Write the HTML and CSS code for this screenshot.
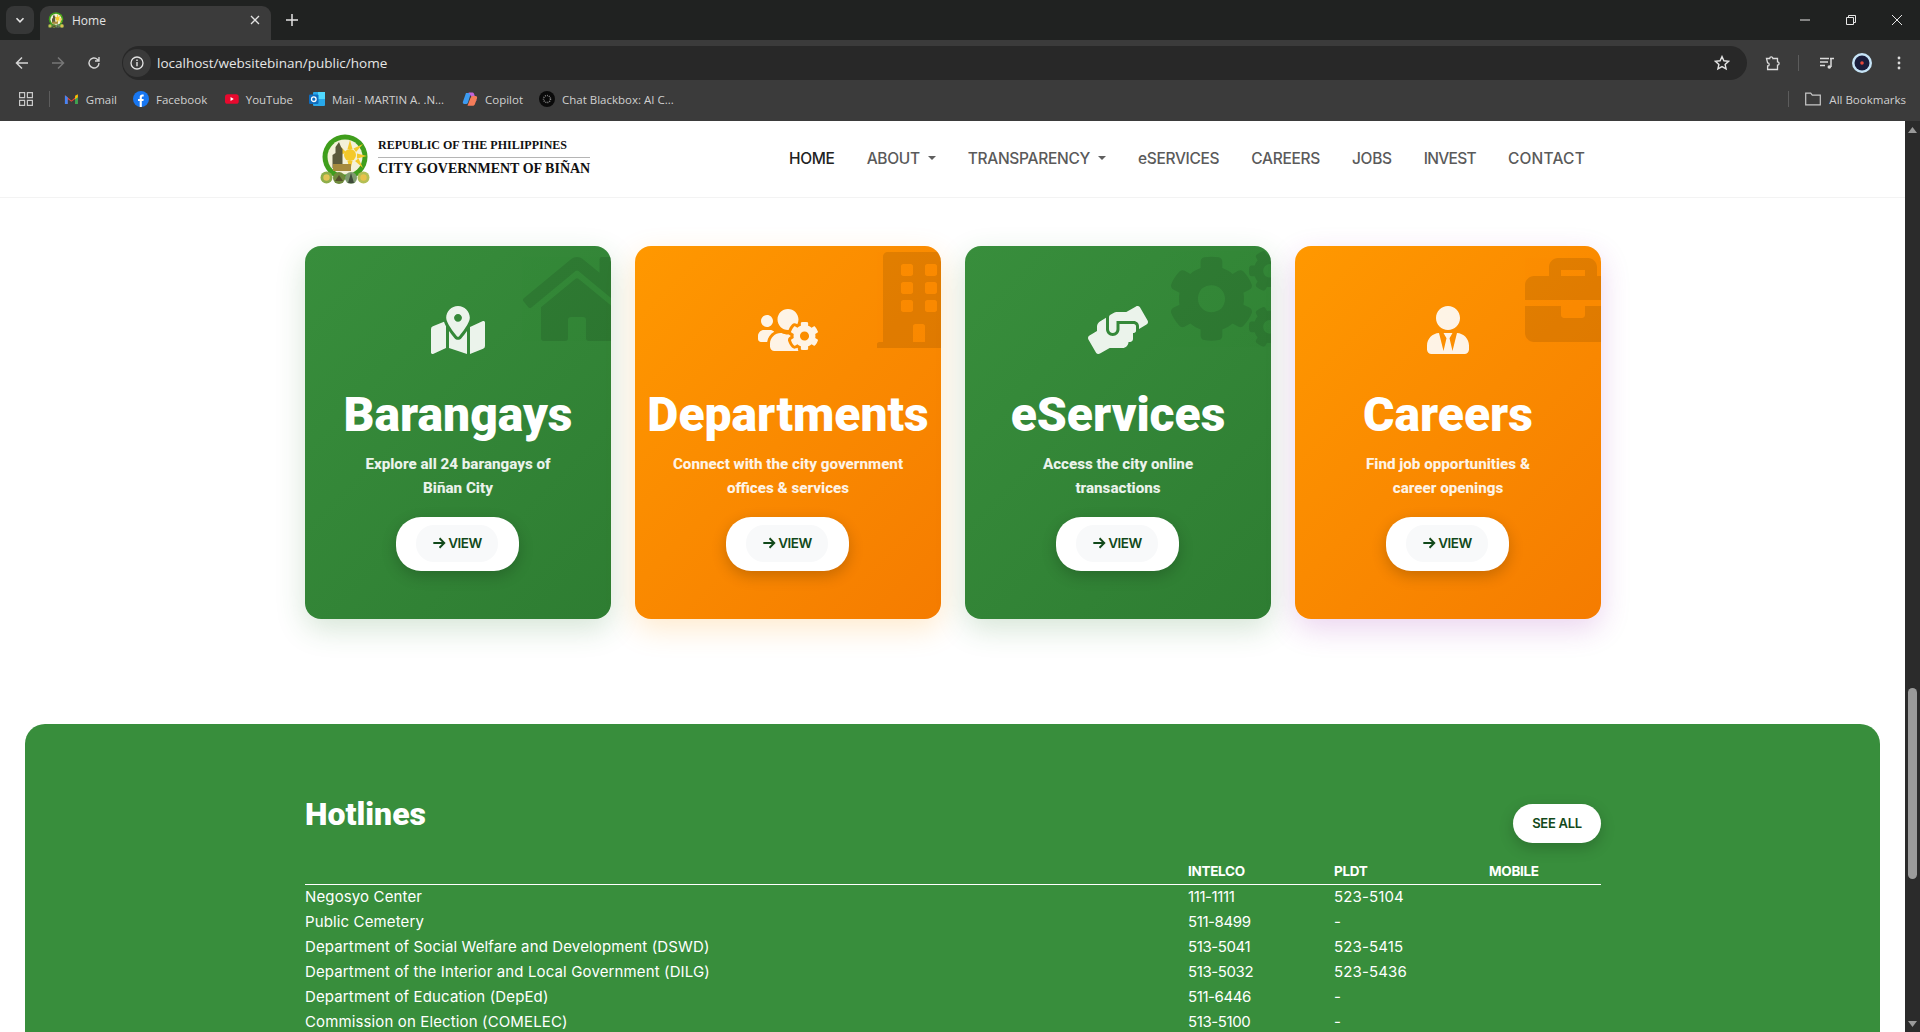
FILE: index.html
```html
<!DOCTYPE html>
<html lang="en">
<head>
<meta charset="utf-8">
<title>Home</title>
<link rel="stylesheet" href="styles.css">
</head>
<body>
<svg class="defs" width="0" height="0" aria-hidden="true">
  <symbol id="seal" viewBox="0 0 50 50">
    <circle cx="25" cy="23" r="22.5" fill="#3f9e1c"/>
    <circle cx="25" cy="23" r="17.5" fill="#f4f1d8"/>
    <g fill="#f4c92a"><circle cx="30" cy="21" r="6"/><path d="M30 6l2.500 9h-5zM43 10l-7 8-2.500-3.500zM47 22l-10 2.500v-5zM43 34l-8-7 3.500-2.500zM30 37l-2.500-10h5zM19 11l7 7-3.500 2.500z"/></g>
    <path d="M19 8l2 5 1.500 2v19h-10V21l3-2v-6z" fill="#5c5a3c"/>
    <path d="M13 30h18v7H13z" fill="#a68a3e"/>
    <circle cx="6.500" cy="43.500" r="6" fill="#8fae4a"/><circle cx="19" cy="44" r="6" fill="#6f8a3c"/><circle cx="31" cy="44" r="6" fill="#7f9a70"/><circle cx="43.500" cy="43.500" r="6" fill="#b4bf55"/>
    <circle cx="6.500" cy="43.500" r="3.200" fill="#e2c456"/><path d="M15 47l4-6 4 6z" fill="#53502c"/><path d="M28 49l3-10 3 10z" fill="#3f4a3a"/><circle cx="43.500" cy="43.500" r="3.200" fill="#e8c24a"/>
  </symbol>
  <symbol id="i-home" viewBox="0 0 576 512"><path d="M280.37 148.26L96 300.11V464a16 16 0 0 0 16 16l112.06-.29a16 16 0 0 0 15.92-16V368a16 16 0 0 1 16-16h64a16 16 0 0 1 16 16v95.64a16 16 0 0 0 16 16.05L464 480a16 16 0 0 0 16-16V300L295.67 148.26a12.19 12.19 0 0 0-15.3 0zM571.6 251.47L488 182.56V44.05a12 12 0 0 0-12-12h-56a12 12 0 0 0-12 12v72.61L318.47 43a48 48 0 0 0-61 0L4.34 251.47a12 12 0 0 0-1.6 16.9l25.5 31A12 12 0 0 0 45.15 301l235.22-193.74a12.19 12.19 0 0 1 15.3 0L530.9 301a12 12 0 0 0 16.9-1.6l25.5-31a12 12 0 0 0-1.7-16.93z"/></symbol>
  <symbol id="i-building" viewBox="0 0 448 512"><path d="M436 480h-20V24c0-13.255-10.745-24-24-24H56C42.745 0 32 10.745 32 24v456H12c-6.627 0-12 5.373-12 12v20h448v-20c0-6.627-5.373-12-12-12zM128 76c0-6.627 5.373-12 12-12h40c6.627 0 12 5.373 12 12v40c0 6.627-5.373 12-12 12h-40c-6.627 0-12-5.373-12-12V76zm0 96c0-6.627 5.373-12 12-12h40c6.627 0 12 5.373 12 12v40c0 6.627-5.373 12-12 12h-40c-6.627 0-12-5.373-12-12v-40zm52 148h-40c-6.627 0-12-5.373-12-12v-40c0-6.627 5.373-12 12-12h40c6.627 0 12 5.373 12 12v40c0 6.627-5.373 12-12 12zm76 160h-64v-84c0-6.627 5.373-12 12-12h40c6.627 0 12 5.373 12 12v84zm64-172c0 6.627-5.373 12-12 12h-40c-6.627 0-12-5.373-12-12v-40c0-6.627 5.373-12 12-12h40c6.627 0 12 5.373 12 12v40zm0-96c0 6.627-5.373 12-12 12h-40c-6.627 0-12-5.373-12-12v-40c0-6.627 5.373-12 12-12h40c6.627 0 12 5.373 12 12v40zm0-96c0 6.627-5.373 12-12 12h-40c-6.627 0-12-5.373-12-12V76c0-6.627 5.373-12 12-12h40c6.627 0 12 5.373 12 12v40z"/></symbol>
  <symbol id="i-cogs" viewBox="0 0 640 512"><path d="M512.1 191l-8.2 14.3c-3 5.3-9.4 7.5-15.1 5.4-11.8-4.4-22.6-10.7-32.1-18.6-4.6-3.8-5.8-10.5-2.8-15.7l8.2-14.3c-6.9-8-12.3-17.3-15.9-27.4h-16.5c-6 0-11.2-4.3-12.2-10.3-2-12-2.1-24.6 0-37.1 1-6 6.2-10.4 12.2-10.4h16.5c3.6-10.1 9-19.4 15.9-27.4l-8.2-14.3c-3-5.2-1.9-11.9 2.8-15.7 9.5-7.9 20.4-14.2 32.1-18.6 5.7-2.1 12.1.1 15.1 5.4l8.2 14.3c10.5-1.9 21.2-1.9 31.7 0L552 6.3c3-5.3 9.4-7.5 15.1-5.4 11.8 4.4 22.6 10.7 32.1 18.6 4.6 3.8 5.8 10.5 2.8 15.7l-8.2 14.3c6.9 8 12.3 17.3 15.9 27.4h16.5c6 0 11.2 4.3 12.2 10.3 2 12 2.1 24.6 0 37.1-1 6-6.2 10.4-12.2 10.4h-16.5c-3.6 10.1-9 19.4-15.9 27.4l8.2 14.3c3 5.2 1.9 11.9-2.8 15.7-9.5 7.9-20.4 14.2-32.1 18.6-5.7 2.1-12.1-.1-15.1-5.4l-8.2-14.3c-10.4 1.9-21.2 1.9-31.7 0zm-10.5-58.8c38.5 29.6 82.4-14.3 52.8-52.8-38.5-29.7-82.4 14.3-52.8 52.8zM386.3 286.1l33.7 16.8c10.1 5.8 14.5 18.1 10.5 29.1-8.9 24.2-26.4 46.4-42.6 65.8-7.4 8.9-20.2 11.1-30.3 5.3l-29.1-16.8c-16 13.7-34.6 24.6-54.9 31.7v33.6c0 11.6-8.3 21.6-19.7 23.6-24.6 4.2-50.4 4.4-75.9 0-11.5-2-20-11.9-20-23.6V418c-20.3-7.2-38.9-18-54.9-31.7L74 403c-10 5.8-22.9 3.6-30.3-5.3-16.2-19.4-33.3-41.6-42.2-65.7-4-10.9.4-23.2 10.5-29.1l33.3-16.8c-3.9-20.9-3.9-42.4 0-63.4L12 205.8c-10.1-5.8-14.6-18.1-10.5-29 8.9-24.2 26-46.4 42.2-65.8 7.4-8.9 20.2-11.1 30.3-5.3l29.1 16.8c16-13.7 34.6-24.6 54.9-31.7V57.1c0-11.5 8.2-21.5 19.6-23.5 24.6-4.2 50.5-4.4 76-.1 11.5 2 20 11.9 20 23.6v33.6c20.3 7.2 38.9 18 54.9 31.7l29.1-16.8c10-5.8 22.9-3.6 30.3 5.3 16.2 19.4 33.2 41.6 42.1 65.8 4 10.9.1 23.2-10 29.1l-33.7 16.8c3.9 21 3.9 42.5 0 63.5zm-117.6 21.1c59.2-77-28.7-164.9-105.7-105.7-59.2 77 28.7 164.9 105.7 105.7zm243.4 182.7l-8.2 14.3c-3 5.3-9.4 7.5-15.1 5.4-11.8-4.4-22.6-10.7-32.1-18.6-4.6-3.8-5.8-10.5-2.8-15.7l8.2-14.3c-6.9-8-12.3-17.3-15.9-27.4h-16.5c-6 0-11.2-4.3-12.2-10.3-2-12-2.1-24.6 0-37.1 1-6 6.2-10.4 12.2-10.4h16.5c3.6-10.1 9-19.4 15.9-27.4l-8.2-14.3c-3-5.2-1.9-11.9 2.8-15.7 9.5-7.9 20.4-14.2 32.1-18.6 5.7-2.1 12.1.1 15.1 5.4l8.2 14.3c10.5-1.9 21.2-1.9 31.7 0l8.2-14.3c3-5.3 9.4-7.5 15.1-5.4 11.8 4.4 22.6 10.7 32.1 18.6 4.6 3.8 5.8 10.5 2.8 15.7l-8.2 14.3c6.9 8 12.3 17.3 15.9 27.4h16.5c6 0 11.2 4.3 12.2 10.3 2 12 2.1 24.6 0 37.1-1 6-6.2 10.4-12.2 10.4h-16.5c-3.6 10.1-9 19.4-15.9 27.4l8.2 14.3c3 5.2 1.9 11.9-2.8 15.7-9.5 7.9-20.4 14.2-32.1 18.6-5.7 2.1-12.1-.1-15.1-5.4l-8.2-14.3c-10.4 1.9-21.2 1.9-31.7 0zM501.6 431c38.5 29.6 82.4-14.3 52.8-52.8-38.5-29.6-82.4 14.3-52.8 52.8z"/></symbol>
  <symbol id="i-briefcase" viewBox="0 0 512 512"><path d="M320 336c0 8.84-7.16 16-16 16h-96c-8.84 0-16-7.16-16-16v-48H0v144c0 25.6 22.4 48 48 48h416c25.6 0 48-22.4 48-48V288H320v48zm144-208h-80V80c0-25.6-22.4-48-48-48H176c-25.6 0-48 22.4-48 48v48H48c-25.6 0-48 22.4-48 48v80h512v-80c0-25.6-22.4-48-48-48zm-144 0H192V96h128v32z"/></symbol>
  <symbol id="i-map" viewBox="0 0 576 512"><path d="M288 0c-69.59 0-126 56.41-126 126 0 56.26 82.35 158.8 113.9 196.02 6.39 7.54 17.82 7.54 24.2 0C331.65 284.8 414 182.26 414 126 414 56.41 357.59 0 288 0zm0 168c-23.2 0-42-18.8-42-42s18.8-42 42-42 42 18.8 42 42-18.8 42-42 42zM20.12 215.95A32.006 32.006 0 0 0 0 245.66v250.32c0 11.32 11.43 19.06 21.94 14.86L160 448V214.92c-8.84-15.98-16.07-31.54-21.25-46.42L20.12 215.95zM288 359.67c-14.07 0-27.38-6.18-36.51-16.96-19.66-23.2-40.57-49.62-59.49-76.72v182l192 64V266c-18.92 27.09-39.82 53.52-59.49 76.72-9.13 10.77-22.44 16.95-36.51 16.95zm266.06-198.51L416 224v288l139.88-55.95A31.996 31.996 0 0 0 576 426.34V176.02c0-11.32-11.43-19.06-21.94-14.86z"/></symbol>
  <symbol id="i-users" viewBox="0 0 640 512"><path d="M610.5 341.3c2.6-14.1 2.6-28.5 0-42.6l25.8-14.9c3-1.7 4.3-5.2 3.3-8.5-6.7-21.6-18.2-41.2-33.2-57.4-2.3-2.5-6-3.1-9-1.4l-25.8 14.9c-10.9-9.3-23.4-16.5-36.9-21.3v-29.8c0-3.4-2.4-6.4-5.7-7.1-22.3-5-45-4.8-66.2 0-3.3.7-5.7 3.7-5.7 7.1v29.8c-13.5 4.8-26 12-36.9 21.3l-25.8-14.9c-2.9-1.7-6.7-1.1-9 1.4-15 16.2-26.5 35.8-33.2 57.4-1 3.3.4 6.8 3.3 8.5l25.8 14.9c-2.6 14.1-2.6 28.5 0 42.6l-25.8 14.9c-3 1.7-4.3 5.2-3.3 8.5 6.7 21.6 18.2 41.1 33.2 57.4 2.3 2.5 6 3.1 9 1.4l25.8-14.9c10.9 9.3 23.4 16.5 36.9 21.3v29.8c0 3.4 2.4 6.4 5.7 7.1 22.3 5 45 4.8 66.2 0 3.3-.7 5.7-3.7 5.7-7.1v-29.8c13.5-4.8 26-12 36.9-21.3l25.8 14.9c2.9 1.7 6.7 1.1 9-1.4 15-16.2 26.5-35.8 33.2-57.4 1-3.3-.4-6.8-3.3-8.5l-25.8-14.9zM496 368.5c-26.8 0-48.5-21.8-48.5-48.5s21.8-48.5 48.5-48.5 48.5 21.8 48.5 48.5-21.7 48.5-48.5 48.5zM96 224c35.3 0 64-28.7 64-64s-28.7-64-64-64-64 28.7-64 64 28.7 64 64 64zm224 32c1.9 0 3.7-.5 5.6-.6 8.3-21.7 20.5-42.1 36.3-59.2 7.4-8 17.9-12.6 28.9-12.6 6.9 0 13.7 1.8 19.6 5.3l7.9 4.6c.8-.5 1.6-.9 2.4-1.4 7-14.6 11.2-30.8 11.2-48 0-61.9-50.1-112-112-112S208 82.1 208 144c0 61.9 50.1 112 112 112zm105.2 194.5c-2.3-1.2-4.6-2.6-6.8-3.9-8.2 4.8-15.3 9.8-27.5 9.8-10.9 0-21.4-4.6-28.9-12.6-18.3-19.8-32.3-43.9-40.2-69.6-10.7-34.5 24.9-49.7 25.8-50.3-.1-2.6-.1-5.2 0-7.8l-7.9-4.6c-3.8-2.2-7-5-9.8-8.1-3.3.2-6.5.6-9.8.6-24.6 0-47.6-6-68.5-16h-8.3C179.6 288 128 339.6 128 403.2V432c0 26.5 21.5 48 48 48h255.4c-3.7-6-6.2-12.8-6.2-20.3v-9.2zM173.1 274.6C161.5 263.1 145.6 256 128 256H64c-35.3 0-64 28.7-64 64v32c0 17.7 14.3 32 32 32h65.9c6.3-47.4 34.9-87.3 75.2-109.4z"/></symbol>
  <symbol id="i-hands" viewBox="0 0 640 512"><path d="M488 192H336v56c0 39.7-32.3 72-72 72s-72-32.3-72-72V126.4l-64.9 39C107.8 176.9 96 197.8 96 220.2v47.3l-80 46.2C.7 322.5-4.6 342.1 4.3 357.4l80 138.6c8.8 15.3 28.4 20.5 43.7 11.7L231.4 448H368c35.3 0 64-28.7 64-64h16c17.7 0 32-14.3 32-32v-64h8c13.3 0 24-10.7 24-24v-48c0-13.3-10.7-24-24-24zm147.7-37.4L555.7 16C546.9.7 527.3-4.5 512 4.3L408.6 64H306.4c-12 0-23.7 3.4-33.9 9.7L239 94.6c-9.4 5.8-15 16.1-15 27.1V248c0 22.1 17.9 40 40 40s40-17.9 40-40v-88h184c30.9 0 56 25.1 56 56v28.5l80-46.2c15.3-8.9 20.5-28.4 11.7-43.7z"/></symbol>
  <symbol id="i-tie" viewBox="0 0 448 512"><path d="M224 256c70.7 0 128-57.3 128-128S294.7 0 224 0 96 57.3 96 128s57.3 128 128 128zm95.8 32.6L272 480l-32-136 32-56h-96l32 56-32 136-47.8-191.4C56.9 292 0 350.3 0 422.4V464c0 26.5 21.5 48 48 48h352c26.5 0 48-21.5 48-48v-41.6c0-72.1-56.9-130.4-128.2-133.8z"/></symbol>
  <symbol id="i-arrow" viewBox="0 0 16 16"><path d="M1.500 8h12.200M8.600 2.600L14 8l-5.400 5.400" fill="none" stroke="currentColor" stroke-width="2.200"/></symbol>
</svg>

<div class="window">
  <header class="tabstrip">
    <div class="tablist"><svg width="10" height="10" viewBox="0 0 10 10"><path d="M1.500 3.200L5 6.800l3.500-3.600" fill="none" stroke="#e3e3e3" stroke-width="1.600"/></svg></div>
    <div class="tab">
      <svg class="favicon" width="16" height="16"><use href="#seal"/></svg>
      <span class="tab-title">Home</span>
      <svg class="tab-close" width="10" height="10" viewBox="0 0 10 10"><path d="M1 1l8 8M9 1l-8 8" stroke="#e3e3e3" stroke-width="1.300"/></svg>
    </div>
    <svg class="newtab" width="12" height="12" viewBox="0 0 12 12"><path d="M6 0v12M0 6h12" stroke="#e3e3e3" stroke-width="1.500"/></svg>
    <div class="winctl">
      <svg width="10" height="10" viewBox="0 0 10 10"><path d="M0 5h10" stroke="#e6e6e6"/></svg>
      <svg width="10" height="10" viewBox="0 0 10 10"><path d="M.5 2.500h7v7h-7zM2.500 2.500V.5h7v7h-2" fill="none" stroke="#e6e6e6"/></svg>
      <svg width="10" height="10" viewBox="0 0 10 10"><path d="M0 0l10 10M10 0L0 10" stroke="#e6e6e6"/></svg>
    </div>
  </header>

  <div class="toolbar">
    <svg class="tb-btn" width="14" height="14" viewBox="0 0 14 14"><path d="M13 7H2M7 1.500L1.500 7 7 12.500" fill="none" stroke="#d5d5d5" stroke-width="1.500"/></svg>
    <svg class="tb-btn" width="14" height="14" viewBox="0 0 14 14"><path d="M1 7h11M7 1.500L12.500 7 7 12.500" fill="none" stroke="#777" stroke-width="1.500"/></svg>
    <svg class="tb-btn" width="14" height="14" viewBox="0 0 14 14"><path d="M12 7a5 5 0 1 1-1.500-3.600L12 5M12 1v4H8" fill="none" stroke="#d5d5d5" stroke-width="1.400"/></svg>
    <div class="omnibox">
      <span class="site-info"><svg width="14" height="14" viewBox="0 0 14 14"><circle cx="7" cy="7" r="6" fill="none" stroke="#e3e3e3" stroke-width="1.300"/><path d="M7 6v4.200M7 3.600v1.300" stroke="#e3e3e3" stroke-width="1.400"/></svg></span>
      <span class="url">localhost/websitebinan/public/home</span>
      <svg class="star" width="16" height="16" viewBox="0 0 16 16"><path d="M8 1.600l1.900 4.200 4.600.5-3.400 3.100 1 4.500L8 11.600l-4.100 2.300 1-4.500-3.400-3.100 4.600-.5z" fill="none" stroke="#e3e3e3" stroke-width="1.400"/></svg>
    </div>
    <div class="tb-right">
      <svg width="16" height="16" viewBox="0 0 16 16"><path d="M1.500 3.500h3.200a1.600 1.600 0 1 1 3.200 0h4.600v3.400a1.600 1.600 0 1 1 0 3.200v4.400H2.600V11a1.600 1.600 0 1 0 0-3.200L1.500 3.500z" fill="none" stroke="#dcdcdc" stroke-width="1.300"/></svg>
      <i class="tb-sep"></i>
      <svg width="16" height="16" viewBox="0 0 16 16"><path d="M1 3.500h9M1 7h8M1 10.500h5" stroke="#dcdcdc" stroke-width="1.300"/><path d="M11 3.500h4M12 3.500v8.500" stroke="#dcdcdc" stroke-width="1.500"/><circle cx="10.300" cy="12" r="1.800" fill="#dcdcdc"/></svg>
      <svg class="profile" width="20" height="20" viewBox="0 0 20 20"><circle cx="10" cy="10" r="10" fill="#c6e4f7"/><circle cx="10" cy="10" r="7.500" fill="#1a1d3c"/><circle cx="10" cy="10" r="1.800" fill="#e8483a"/></svg>
      <svg width="4" height="14" viewBox="0 0 4 14"><circle cx="2" cy="2" r="1.400" fill="#dcdcdc"/><circle cx="2" cy="7" r="1.400" fill="#dcdcdc"/><circle cx="2" cy="12" r="1.400" fill="#dcdcdc"/></svg>
    </div>
  </div>

  <nav class="bookmarks">
    <svg class="apps" width="14" height="14" viewBox="0 0 14 14"><path d="M.6.600h5v5h-5zM8.400.600h5v5h-5zM.6 8.400h5v5h-5zM8.400 8.400h5v5h-5z" fill="none" stroke="#c8c8c8" stroke-width="1.200"/></svg>
    <i class="bm-sep"></i>
    <a class="bm bm-gmail"><svg width="16" height="16" viewBox="0 0 16 16"><path d="M1 13.500V4l7 5.500L15 4v9.500h-3V8L8 11 4 8v5.500z" fill="#ea4335"/><path d="M1 4v9.500h3V6z" fill="#4285f4"/><path d="M15 4v9.500h-3V6z" fill="#34a853"/><path d="M12 4.500L15 2.800V6l-3 2.200z" fill="#fbbc04"/></svg><span>Gmail</span></a>
    <a class="bm bm-fb"><svg width="16" height="16" viewBox="0 0 16 16"><circle cx="8" cy="8" r="8" fill="#1877f2"/><path d="M6.700 16V10H5V8h1.700V6.300C6.700 4.500 7.800 3.600 9.300 3.600c.7 0 1.400.1 1.400.1v1.700h-.8c-.8 0-1.100.5-1.100 1V8h1.900l-.3 2H8.800v6z" fill="#fff"/></svg><span>Facebook</span></a>
    <a class="bm bm-yt"><svg width="16" height="16" viewBox="0 0 16 16"><rect y="2.500" width="16" height="11" rx="3" fill="#e8092e"/><path d="M6.500 5.800v4.400L10.200 8z" fill="#fff"/></svg><span>YouTube</span></a>
    <a class="bm bm-mail"><svg width="16" height="16" viewBox="0 0 16 16"><rect x="4" y="1" width="12" height="14" rx="1" fill="#28a8ea"/><rect x="9" y="1" width="7" height="7" fill="#50d9ff"/><rect y="3.500" width="9.500" height="9.500" rx="1" fill="#0f6cbd"/><circle cx="4.800" cy="8.200" r="2.300" fill="none" stroke="#fff" stroke-width="1.300"/></svg><span>Mail - MARTIN A. .N...</span></a>
    <a class="bm bm-cop"><svg width="16" height="16" viewBox="0 0 16 16"><path d="M4 2h5l-3 9.500c-.3 1-1 1.500-2 1.500H2.500C1 13 .5 12 1 10.500z" fill="#3d9bf0"/><path d="M6.500 1.500H10c1 0 1.800.5 2.100 1.500l2.500 7L10 6.500z" fill="#c364d9"/><path d="M10 5h3.500c1.500 0 2 1 1.500 2.500L13 13c-.3 1-1.200 1.800-2.300 1.800H5.500L8.500 7z" fill="#f47c5a"/></svg><span>Copilot</span></a>
    <a class="bm bm-bb"><svg width="16" height="16" viewBox="0 0 16 16"><circle cx="8" cy="8" r="8" fill="#0a0a0a"/><circle cx="8" cy="8" r="3.500" fill="none" stroke="#888" stroke-width="1.500" stroke-dasharray="1 1"/></svg><span>Chat Blackbox: AI C...</span></a>
    <div class="bm-all">
      <i class="bm-sep"></i>
      <svg width="16" height="14" viewBox="0 0 16 14"><path d="M.7 12.800V1.200h5l1.600 2h8v9.600z" fill="none" stroke="#c8c8c8" stroke-width="1.200"/></svg>
      <span>All Bookmarks</span>
    </div>
  </nav>

  <div class="viewport">
    <main class="page">
      <div class="sitenav">
        <a class="brand">
          <svg class="brand-seal" width="50" height="50"><use href="#seal"/></svg>
          <span class="brand-text">
            <span class="brand-l1">REPUBLIC OF THE PHILIPPINES</span>
            <span class="brand-l2">CITY GOVERNMENT OF BIÑAN</span>
          </span>
        </a>
        <ul class="menu">
          <li class="menu-item active">HOME</li>
          <li class="menu-item caret">ABOUT</li>
          <li class="menu-item caret">TRANSPARENCY</li>
          <li class="menu-item">eSERVICES</li>
          <li class="menu-item">CAREERS</li>
          <li class="menu-item">JOBS</li>
          <li class="menu-item menu-invest">INVEST</li>
          <li class="menu-item menu-contact">CONTACT</li>
        </ul>
      </div>

      <section class="cards">
        <article class="card green">
          <svg class="card-bg bg-home"><use href="#i-home"/></svg>
          <svg class="card-icon w54"><use href="#i-map"/></svg>
          <h2 class="card-title">Barangays</h2>
          <p class="card-desc">Explore all 24 barangays of<br>Biñan City</p>
          <a class="btn-view"><span class="btn-inner"><svg class="arrow"><use href="#i-arrow"/></svg>VIEW</span></a>
        </article>
        <article class="card orange">
          <svg class="card-bg bg-building"><use href="#i-building"/></svg>
          <svg class="card-icon w60"><use href="#i-users"/></svg>
          <h2 class="card-title">Departments</h2>
          <p class="card-desc">Connect with the city government<br>offices &amp; services</p>
          <a class="btn-view"><span class="btn-inner"><svg class="arrow"><use href="#i-arrow"/></svg>VIEW</span></a>
        </article>
        <article class="card green">
          <svg class="card-bg bg-cogs"><use href="#i-cogs"/></svg>
          <svg class="card-icon w60"><use href="#i-hands"/></svg>
          <h2 class="card-title">eServices</h2>
          <p class="card-desc">Access the city online<br>transactions</p>
          <a class="btn-view"><span class="btn-inner"><svg class="arrow"><use href="#i-arrow"/></svg>VIEW</span></a>
        </article>
        <article class="card orange violet">
          <svg class="card-bg bg-brief"><use href="#i-briefcase"/></svg>
          <svg class="card-icon w42"><use href="#i-tie"/></svg>
          <h2 class="card-title">Careers</h2>
          <p class="card-desc">Find job opportunities &amp;<br>career openings</p>
          <a class="btn-view"><span class="btn-inner"><svg class="arrow"><use href="#i-arrow"/></svg>VIEW</span></a>
        </article>
      </section>

      <section class="hotlines">
        <div class="hot-head">
          <h2 class="hot-title">Hotlines</h2>
          <a class="btn-all">SEE ALL</a>
        </div>
        <table class="hot-table">
          <thead>
            <tr><th></th><th>INTELCO</th><th>PLDT</th><th>MOBILE</th></tr>
          </thead>
          <tbody>
            <tr><td>Negosyo Center</td><td>111-1111</td><td>523-5104</td><td></td></tr>
            <tr><td>Public Cemetery</td><td>511-8499</td><td>-</td><td></td></tr>
            <tr><td>Department of Social Welfare and Development (DSWD)</td><td>513-5041</td><td>523-5415</td><td></td></tr>
            <tr><td>Department of the Interior and Local Government (DILG)</td><td>513-5032</td><td>523-5436</td><td></td></tr>
            <tr><td>Department of Education (DepEd)</td><td>511-6446</td><td>-</td><td></td></tr>
            <tr><td>Commission on Election (COMELEC)</td><td>513-5100</td><td>-</td><td></td></tr>
          </tbody>
        </table>
      </section>
    </main>
    <aside class="scrollbar">
      <svg class="sb-arrow" width="9" height="6" viewBox="0 0 9 6"><path d="M4.500 0L9 6H0z" fill="#9a9a9a"/></svg>
      <div class="sb-thumb"></div>
      <svg class="sb-arrow sb-down" width="9" height="6" viewBox="0 0 9 6"><path d="M4.500 6L9 0H0z" fill="#9a9a9a"/></svg>
    </aside>
  </div>
</div>
</body>
</html>
```
FILE: styles.css
```css
* { box-sizing: border-box; }
html, body { margin: 0; padding: 0; }
body { font-family: "Inter", "Noto Sans", sans-serif; background: #fff; overflow: hidden; }
.defs { position: absolute; }
.window { width: 1920px; height: 1032px; display: flex; flex-direction: column; overflow: hidden; }

/* browser chrome */
.tabstrip { height: 40px; background: #202221; display: flex; align-items: flex-start; padding-left: 6px; flex: none; }
.tablist { width: 28px; height: 28px; margin-top: 6px; border-radius: 8px; background: #363737; display: flex; align-items: center; justify-content: center; }
.tab { width: 231px; height: 34px; margin: 6px 0 0 6px; padding: 0 11px 6px 8px; background: #3b3b3b; border-radius: 9px 9px 0 0; display: flex; align-items: center; }
.favicon { flex: none; }
.tab-title { font: 12px "Open Sans", sans-serif; color: #e3e3e3; margin-left: 8px; flex: 1; }
.newtab { margin: 14px 0 0 15px; }
.winctl { margin-left: auto; display: flex; gap: 36px; padding: 15px 18px 0 0; }
.winctl svg { display: block; }

.toolbar { height: 40px; background: #3b3b3b; display: flex; align-items: flex-start; padding: 6px 0 0 15px; flex: none; }
.tb-btn { margin: 10px 22px 0 0; flex: none; }
.omnibox { width: 1625px; height: 34px; margin-left: -1px; background: #282828; border-radius: 17px; display: flex; align-items: center; padding: 0 17px 0 0; flex: none; }
.site-info { width: 28px; height: 28px; margin: 0 6px 0 1px; border-radius: 50%; background: #3a3a3a; display: flex; align-items: center; justify-content: center; }
.url { font: 13.500px "Open Sans", sans-serif; color: #e6e6e6; flex: 1; }
.tb-right { display: flex; align-items: center; height: 34px; margin-left: 18px; }
.tb-sep { width: 1px; height: 16px; background: #5c5c5c; margin: 0 20px 0 17px; }
.profile { margin: 0 25px 0 17px; }

.bookmarks { height: 41px; background: #3b3b3b; display: flex; align-items: center; padding: 0 14px 3px 19px; flex: none; font: 11.500px "Open Sans", sans-serif; color: #d0d0d0; }
.bm-sep { display: block; width: 1px; height: 16px; background: #5c5c5c; }
.apps { flex: none; margin-right: 16px; }
.bm { display: flex; align-items: center; gap: 7px; margin-left: 16px; white-space: nowrap; }
.bm-gmail { width: 53px; margin-left: 14px; }
.bm-fb { width: 76px; }
.bm-yt { width: 68px; }
.bm-mail { width: 137px; }
.bm-cop { width: 61px; }
.bm-all { margin-left: auto; display: flex; align-items: center; gap: 8px; }
.bm-all .bm-sep { margin-right: 8px; }

.viewport { flex: 1; display: flex; min-height: 0; }
.page { flex: 1; min-width: 0; background: #fff; overflow: hidden; }
.scrollbar { width: 15px; background: #2b2b2b; display: flex; flex-direction: column; align-items: center; flex: none; }
.sb-arrow { margin-top: 6px; flex: none; }
.sb-thumb { width: 9px; height: 191px; margin-top: 555px; background: #9b9b9b; border-radius: 5px; flex: none; }
.sb-down { margin-top: auto; margin-bottom: 5px; }

/* site nav */
.sitenav { height: 77px; border-bottom: 1px solid #f3f3f3; display: flex; align-items: center; justify-content: space-between; padding: 0 320px 2px 320px; }
.brand { display: flex; align-items: center; gap: 8px; }
.brand-seal { display: block; margin-top: 1px; }
.brand-text { display: flex; flex-direction: column; width: 212px; margin-top: -2px; font-family: "Liberation Serif", serif; font-weight: 700; color: #111; }
.brand-l1 { font-size: 12px; line-height: 17px; padding-bottom: 3px; border-bottom: 1px solid #b5b5b5; white-space: nowrap; }
.brand-l2 { font-size: 14px; line-height: 17px; padding-top: 2px; white-space: nowrap; }
.menu { list-style: none; margin: 0; padding: 0; display: flex; gap: 32px; }
.menu-item { font-size: 15.500px; font-weight: 500; color: #5a5a5a; letter-spacing: -.31px; display: flex; align-items: center; white-space: nowrap; }
.menu-item.active { color: #222; }
.menu-invest { letter-spacing: -.7px; }
.menu-contact { letter-spacing: .2px; }
.caret::after { content: ""; margin-left: 8px; border-top: 4px solid #5f5f5f; border-left: 4px solid transparent; border-right: 4px solid transparent; }

/* cards */
.cards { display: grid; grid-template-columns: repeat(4, 306px); gap: 24px; padding: 48px 0 0 305px; }
.card { position: relative; height: 373px; border-radius: 16px; overflow: hidden; padding-top: 60px; display: flex; flex-direction: column; align-items: center; color: #fff; }
.card.green { background: linear-gradient(135deg, #388e3c, #2e7d32); box-shadow: 0 10px 30px rgba(46, 125, 50, .2); }
.card.orange { background: linear-gradient(135deg, #ff9800, #f57c00); box-shadow: 0 10px 30px rgba(255, 152, 0, .2); }
.card.violet { box-shadow: 0 10px 30px rgba(156, 39, 176, .2); }
.card-bg { position: absolute; top: 6px; right: -20px; height: 96px; fill: #000; opacity: .1; }
.bg-home { width: 108px; top: 5px; }
.bg-building { width: 84px; }
.bg-cogs { width: 120px; top: 5px; }
.bg-brief { width: 96px; top: 6px; }
.card-icon { height: 48px; fill: #fff; opacity: .9; flex: none; margin-right: 1px; }
.w54 { width: 54px; }
.w60 { width: 60px; }
.w42 { width: 42px; }
.card-title { font: 900 48px/57.600px "Roboto", sans-serif; margin: 32px 0 8px; }
.card-desc { font: 800 15.200px/24px "Roboto", sans-serif; margin: 0 0 17px; text-align: center; opacity: .9; }
.btn-view { width: 123px; height: 54px; margin-right: 2px; border-radius: 25px; background: #fff; box-shadow: 0 5px 15px rgba(0, 0, 0, .2); display: flex; align-items: center; justify-content: center; }
.btn-inner { width: 82px; height: 37px; padding-bottom: 1px; border-radius: 18px; background: #f8f9fa; color: #12491a; font-size: 13.500px; font-weight: 600; letter-spacing: -.5px; display: flex; align-items: center; justify-content: center; gap: 2px; }
.arrow { width: 14px; height: 14px; }

/* hotlines */
.hotlines { margin: 105px 25px 0; background: #388e3c; border-radius: 20px 20px 0 0; padding: 71px 279px 0 280px; height: 400px; color: #fff; }
.hot-head { display: flex; justify-content: space-between; align-items: flex-start; height: 63px; }
.hot-title { font: 900 32px/38px "Roboto", sans-serif; margin: 0; }
.btn-all { width: 88px; height: 39px; margin-top: 9px; padding-bottom: 1px; border-radius: 20px; background: #fff; color: #12491a; font-size: 13px; font-weight: 600; letter-spacing: -.3px; display: flex; align-items: center; justify-content: center; box-shadow: 0 5px 15px rgba(0, 0, 0, .2); }
.hot-table { width: 1296px; border-collapse: collapse; table-layout: fixed; font-size: 15px; letter-spacing: .13px; }
.hot-table th:nth-child(1) { width: 883px; }
.hot-table th:nth-child(2) { width: 146px; }
.hot-table th:nth-child(3) { width: 155px; }
.hot-table th { text-align: left; padding: 0; height: 26px; font-weight: 700; font-size: 13.500px; letter-spacing: -.3px; border-bottom: 1px solid #fff; }
.hot-table td { padding: 0; height: 25px; white-space: nowrap; }
.hot-table td:nth-child(2) { letter-spacing: -.4px; }
```
